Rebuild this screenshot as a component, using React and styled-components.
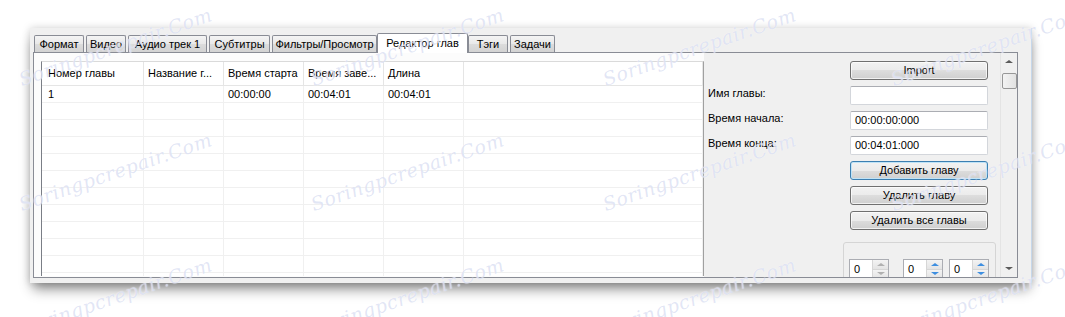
import React from "react";
import styled, { createGlobalStyle, css } from "styled-components";

const GlobalStyle = createGlobalStyle`
  html, body {
    margin: 0;
    padding: 0;
    background: #fff;
  }
  body {
    font-family: "Liberation Sans", Arial, sans-serif;
    font-size: 11px;
    color: #000;
  }
`;

const Stage = styled.div`
  position: relative;
  width: 1065px;
  height: 317px;
  box-sizing: border-box;
  padding: 28px 0 0 30px;
  overflow: hidden;
`;

const Window = styled.div`
  width: 1002px;
  height: 255px;
  box-sizing: border-box;
  padding: 5px 13px 0 3px;
  background: #f0f0f0;
  border-right: 1px solid #c6d7ea;
  box-shadow: 0 9px 12px -3px rgba(0, 0, 0, 0.45), 0 0 8px rgba(0, 0, 0, 0.18);
  display: flex;
  flex-direction: column;
`;

const TabBar = styled.div`
  position: relative;
  z-index: 2;
  height: 19px;
  display: flex;
  align-items: flex-end;
  padding-left: 1px;
`;

const Tab = styled.div`
  box-sizing: border-box;
  width: ${(p) => p.$w}px;
  height: 17px;
  margin-right: 2px;
  border: 1px solid #898c95;
  border-bottom: none;
  border-radius: 2px 2px 0 0;
  background: linear-gradient(#f4f4f4, #e8e8e8 50%, #dcdcdc 50%, #d3d3d3);
  text-align: center;
  line-height: 16px;
  white-space: nowrap;

  ${(p) =>
    p.$active &&
    css`
      height: 20px;
      margin: 0 0 -1px -2px;
      background: #fff;
      line-height: 18px;
      padding-bottom: 2px;
    `}
`;

const TabPage = styled.div`
  box-sizing: border-box;
  height: 226px;
  border: 1px solid #898c95;
  background: #fcfcfc;
  display: flex;
  overflow: hidden;
`;

const ListPane = styled.div`
  width: 670px;
  box-sizing: border-box;
  padding: 8px 0 1px 7px;
  display: flex;
`;

const List = styled.div`
  flex: 1;
  background: #fff;
  border-left: 1px solid #7a7e86;
  border-top: 1px solid #dadada;
  border-right: 1px solid #a0a0a0;
  overflow: hidden;
`;

const cols = "102px 80px 80px 80px 80px 1fr";

const HeaderRow = styled.div`
  display: grid;
  grid-template-columns: ${cols};
  height: 24px;
  box-sizing: border-box;
  border-bottom: 1px solid #e5e5e5;
`;

const HeaderCell = styled.div`
  border-right: 1px solid #e5e5e5;
  padding-left: ${(p) => (p.$first ? 6 : 4)}px;
  line-height: 23px;
  white-space: nowrap;
  overflow: hidden;
`;

const Row = styled.div`
  display: grid;
  grid-template-columns: ${cols};
  height: 17px;
  box-sizing: border-box;
  border-bottom: 1px solid #f0f0f0;
`;

const Cell = styled.div`
  border-right: 1px solid #f0f0f0;
  padding-left: ${(p) => (p.$first ? 6 : 4)}px;
  line-height: 16px;
  white-space: nowrap;
`;

const RightPanel = styled.div`
  width: 313px;
  background: #f0f0f0;
  display: flex;
  overflow: hidden;
`;

const Form = styled.div`
  width: 296px;
  box-sizing: border-box;
  padding: 8px 0 0 4px;
  display: flex;
  flex-direction: column;
`;

const FieldGrid = styled.div`
  display: grid;
  grid-template-columns: 142px 138px;
  grid-auto-rows: 19px;
  row-gap: 6px;
`;

const Label = styled.div`
  grid-column: 1;
  line-height: 15px;
  white-space: nowrap;
`;

const Input = styled.div`
  grid-column: 2;
  box-sizing: border-box;
  background: #fff;
  border: 1px solid #d3d6db;
  border-top-color: #abadb3;
  border-radius: 2px;
  padding-left: 4px;
  line-height: 17px;
`;

const Button = styled.div`
  grid-column: 2;
  box-sizing: border-box;
  border: 1px solid #707070;
  border-radius: 3px;
  background: linear-gradient(#f2f2f2, #ebebeb 50%, #dddddd 50%, #cfcfcf);
  box-shadow: inset 0 0 0 1px rgba(255, 255, 255, 0.7);
  text-align: center;
  line-height: 17px;

  ${(p) =>
    p.$default &&
    css`
      border-color: #3c7fb1;
      box-shadow: inset 0 0 0 1px #bfe3f7;
    `}
`;

const GroupBox = styled.div`
  box-sizing: border-box;
  width: 153px;
  height: 60px;
  margin: 12px 0 0 135px;
  border: 1px solid #d5d5d5;
  border-radius: 3px;
  padding: 16px 0 0 5px;
  display: flex;
`;

const Spin = styled.div`
  box-sizing: border-box;
  width: 40px;
  height: 21px;
  margin-right: ${(p) => p.$mr}px;
  border: 1px solid #abadb3;
  background: #fff;
  display: flex;
`;

const SpinValue = styled.div`
  flex: 1;
  padding-left: 4px;
  line-height: 19px;
`;

const SpinButtons = styled.div`
  width: 15px;
  border-left: 1px solid #d6d6d6;
  display: flex;
  flex-direction: column;
`;

const SpinHalf = styled.div`
  flex: 1;
  background: linear-gradient(#f3f3f3, #e4e4e4);
  border-bottom: 1px solid #d6d6d6;
  display: flex;
  align-items: center;
  justify-content: center;
`;

const Arrow = styled.span`
  width: 0;
  height: 0;
  border-left: ${(p) => p.$size}px solid transparent;
  border-right: ${(p) => p.$size}px solid transparent;
  ${(p) =>
    p.$down
      ? css`
          border-top: ${p.$size - 1}px solid ${p.$color};
        `
      : css`
          border-bottom: ${p.$size - 1}px solid ${p.$color};
        `}
`;

const Scrollbar = styled.div`
  width: 17px;
  box-sizing: border-box;
  border-left: 1px solid #e4e4e4;
  display: flex;
  flex-direction: column;
  align-items: center;
`;

const ScrollButton = styled.div`
  height: 17px;
  width: 100%;
  display: flex;
  align-items: center;
  justify-content: center;
  margin-top: ${(p) => (p.$bottom ? "auto" : "0")};
`;

const Thumb = styled.div`
  box-sizing: border-box;
  width: 15px;
  height: 16px;
  margin-top: 3px;
  border: 1px solid #979797;
  border-radius: 2px;
  background: linear-gradient(90deg, #f3f3f3, #e2e2e2);
`;

const Watermark = styled.span`
  position: absolute;
  left: ${(p) => p.$x}px;
  top: ${(p) => p.$y - 22}px;
  line-height: 22px;
  transform: rotate(-19deg);
  transform-origin: 0 100%;
  font: italic 19px "DejaVu Serif", serif;
  letter-spacing: 0.5px;
  color: rgba(165, 176, 225, 0.32);
  text-shadow: 0 0 1px rgba(255, 255, 255, 0.9);
  white-space: nowrap;
  pointer-events: none;
  z-index: 5;
`;

const tabs = [
  { label: "Формат", w: 50 },
  { label: "Видео", w: 40 },
  { label: "Аудио трек 1", w: 79 },
  { label: "Субтитры", w: 61 },
  { label: "Фильтры/Просмотр", w: 105 },
  { label: "Редактор глав", w: 91, active: true },
  { label: "Тэги", w: 40 },
  { label: "Задачи", w: 45 },
];

const headers = ["Номер главы", "Название г...", "Время старта", "Время заве...", "Длина", ""];
const chapters = [["1", "", "00:00:00", "00:04:01", "00:04:01", ""]];
const emptyRows = 11;

const marks = [];
[90, 215, 340].forEach((y) =>
  [23, 315, 607, 895].forEach((x) => marks.push({ x, y }))
);

const SpinBox = ({ mr, color }) => (
  <Spin $mr={mr}>
    <SpinValue>0</SpinValue>
    <SpinButtons>
      <SpinHalf>
        <Arrow $size={4} $color={color} />
      </SpinHalf>
      <SpinHalf>
        <Arrow $size={4} $color={color} $down />
      </SpinHalf>
    </SpinButtons>
  </Spin>
);

export default function App() {
  const blank = headers.map(() => "");
  const rows = [...chapters, ...Array.from({ length: emptyRows }, () => blank)];

  return (
    <>
      <GlobalStyle />
      <Stage>
        <Window>
          <TabBar>
            {tabs.map((t) => (
              <Tab key={t.label} $w={t.w} $active={t.active}>
                {t.label}
              </Tab>
            ))}
          </TabBar>
          <TabPage>
            <ListPane>
              <List>
                <HeaderRow>
                  {headers.map((h, i) => (
                    <HeaderCell key={i} $first={i === 0}>
                      {h}
                    </HeaderCell>
                  ))}
                </HeaderRow>
                {rows.map((r, ri) => (
                  <Row key={ri}>
                    {r.map((c, ci) => (
                      <Cell key={ci} $first={ci === 0}>
                        {c}
                      </Cell>
                    ))}
                  </Row>
                ))}
              </List>
            </ListPane>
            <RightPanel>
              <Form>
                <FieldGrid>
                  <Button>Import</Button>
                  <Label>Имя главы:</Label>
                  <Input />
                  <Label>Время начала:</Label>
                  <Input>00:00:00:000</Input>
                  <Label>Время конца:</Label>
                  <Input>00:04:01:000</Input>
                  <Button $default>Добавить главу</Button>
                  <Button>Удалить главу</Button>
                  <Button>Удалить все главы</Button>
                </FieldGrid>
                <GroupBox>
                  <SpinBox mr={14} color="#b0b0b0" />
                  <SpinBox mr={6} color="#3d8ee0" />
                  <SpinBox mr={0} color="#3d8ee0" />
                </GroupBox>
              </Form>
              <Scrollbar>
                <ScrollButton>
                  <Arrow $size={4} $color="#5a5a5a" />
                </ScrollButton>
                <Thumb />
                <ScrollButton $bottom>
                  <Arrow $size={4} $color="#5a5a5a" $down />
                </ScrollButton>
              </Scrollbar>
            </RightPanel>
          </TabPage>
        </Window>
        {marks.map((m, i) => (
          <Watermark key={i} $x={m.x} $y={m.y}>
            Soringpcrepair.Com
          </Watermark>
        ))}
      </Stage>
    </>
  );
}
